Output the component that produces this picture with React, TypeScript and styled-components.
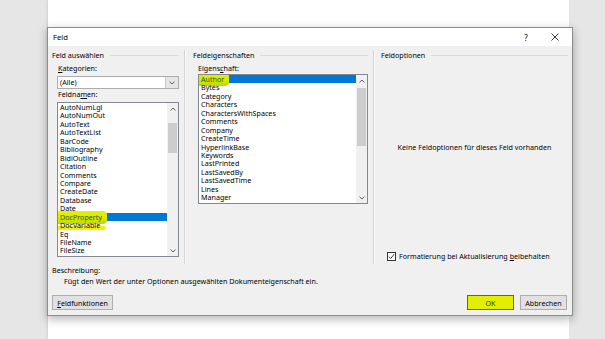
import React from "react";
import styled, { createGlobalStyle } from "styled-components";

const Global = createGlobalStyle`
  html, body { margin: 0; padding: 0; }
  body {
    width: 605px; height: 339px; overflow: hidden;
    font-family: "Noto Sans", "Open Sans", sans-serif;
    font-size: 7.15px; color: #000;
  }
`;

const Screen = styled.div`
  position: relative;
  display: flex;
  width: 605px;
  height: 339px;
`;

const Gutter = styled.div<{ $w: number }>`
  width: ${(p) => p.$w}px;
  background: #e6e6e6;
`;

const Paper = styled.div`
  flex: 1;
  background: #fff;
  box-shadow: 0 0 3px rgba(0, 0, 0, 0.18);
`;

const Dialog = styled.div`
  position: absolute;
  left: 47px;
  top: 27px;
  width: 526px;
  height: 289px;
  box-sizing: border-box;
  border: 1px solid #8c8c8c;
  box-shadow: 0 3px 9px rgba(0, 0, 0, 0.3);
  display: flex;
  flex-direction: column;
  background: #f0f0f0;
`;

const TitleBar = styled.div`
  height: 18px;
  flex: none;
  background: #fff;
  display: flex;
  align-items: center;
  padding-left: 5px;
  font-size: 7.6px;
`;

const Title = styled.span`
  flex: 1;
`;

const TitleBtn = styled.div<{ $w: number }>`
  width: ${(p) => p.$w}px;
  height: 18px;
  display: flex;
  align-items: center;
  justify-content: center;
  font-size: 8px;
`;

const Body = styled.div`
  flex: 1;
  display: flex;
  flex-direction: column;
  padding: 4px 4px 5px 4px;
`;

const Columns = styled.div`
  display: grid;
  grid-template-columns: 132px 189px 1fr;
  height: 214px;
`;

const Col = styled.div<{ $pl: number; $pr: number; $sep?: boolean }>`
  display: flex;
  flex-direction: column;
  padding-left: ${(p) => p.$pl}px;
  padding-right: ${(p) => p.$pr}px;
  border-left: ${(p) => (p.$sep ? "1px solid #d2d2d2" : "none")};
  box-shadow: ${(p) => (p.$sep ? "inset 1px 0 0 #fbfbfb" : "none")};
  min-width: 0;
`;

const Heading = styled.div`
  height: 10px;
  line-height: 10px;
  display: flex;
  align-items: center;
  gap: 6px;
  white-space: nowrap;
  &::after {
    content: "";
    flex: 1;
    height: 1px;
    background: #dcdcdc;
  }
`;

const Label = styled.div<{ $mt: number; $ml: number }>`
  height: 10px;
  line-height: 10px;
  margin-top: ${(p) => p.$mt}px;
  margin-left: ${(p) => p.$ml}px;
`;

const Combo = styled.div`
  margin: 3px 0 0 5px;
  width: 122px;
  height: 13px;
  box-sizing: border-box;
  border: 1px solid #adadad;
  background: #fff;
  display: flex;
  align-items: stretch;
`;

const ComboText = styled.div`
  flex: 1;
  padding-left: 2px;
  line-height: 11px;
`;

const ComboBtn = styled.div`
  width: 12px;
  background: #e5e5e5;
  border-left: 1px solid #c8c8c8;
  display: flex;
  align-items: center;
  justify-content: center;
`;

const ListBox = styled.div<{ $w: number; $h: number; $mt: number }>`
  margin: ${(p) => p.$mt}px 0 0 5px;
  width: ${(p) => p.$w}px;
  height: ${(p) => p.$h}px;
  box-sizing: border-box;
  border: 1px solid #828790;
  background: #fff;
  display: flex;
  overflow: hidden;
`;

const Items = styled.div`
  flex: 1;
  min-width: 0;
`;

const Row = styled.div<{ $selected?: boolean }>`
  height: 8.45px;
  line-height: 8.45px;
  padding-left: 2px;
  white-space: nowrap;
  background: ${(p) => (p.$selected ? "#0078d7" : "transparent")};
  color: ${(p) => (p.$selected ? "#fff" : "#000")};
`;

const Mark = styled.span<{ $half?: boolean }>`
  display: inline-block;
  margin: -2px 0 -3px -3px;
  padding: 2px 5px 3px 3px;
  line-height: 8.45px;
  color: ${(p) => (p.$half ? "#000" : "#2a5c00")};
  background: ${(p) =>
    p.$half
      ? "linear-gradient(to bottom, transparent 0%, transparent 50%, #eef200 50%, #eef200 80%, transparent 80%)"
      : "linear-gradient(to bottom, #e8f000 0%, #d6e800 60%, #b6d80f 100%)"};
  border-radius: 2px 4px 4px 2px;
`;

const Scrollbar = styled.div`
  width: 11px;
  background: #f0f0f0;
  display: flex;
  flex-direction: column;
`;

const ArrowBtn = styled.div`
  height: 11px;
  display: flex;
  align-items: center;
  justify-content: center;
  flex: none;
`;

const Track = styled.div<{ $top: number }>`
  flex: 1;
  padding-top: ${(p) => p.$top}px;
`;

const Thumb = styled.div<{ $h: number }>`
  height: ${(p) => p.$h}px;
  margin: 0 1px;
  background: #cdcdcd;
`;

const Message = styled.div`
  margin-top: 82px;
  height: 10px;
  line-height: 10px;
  text-align: center;
`;

const CheckRow = styled.div`
  margin-top: 99px;
  margin-left: 6px;
  display: flex;
  align-items: center;
  gap: 3px;
  height: 10px;
`;

const CheckBox = styled.div`
  width: 9px;
  height: 9px;
  box-sizing: border-box;
  border: 1px solid #333;
  background: #fff;
  display: flex;
  align-items: center;
  justify-content: center;
`;

const Description = styled.div`
  margin-top: 1px;
`;

const DescLine = styled.div<{ $indent: number }>`
  height: 10.5px;
  line-height: 10.5px;
  padding-left: ${(p) => p.$indent}px;
`;

const Footer = styled.div`
  margin-top: 9px;
  display: flex;
  align-items: center;
  gap: 6px;
  padding-right: 1px;
`;

const Spacer = styled.div`
  flex: 1;
`;

const Button = styled.div<{ $w: number; $default?: boolean }>`
  width: ${(p) => p.$w}px;
  height: 15px;
  box-sizing: border-box;
  border: 1px solid ${(p) => (p.$default ? "#0078d7" : "#adadad")};
  background: ${(p) => (p.$default ? "#e4ee00" : "#e1e1e1")};
  display: flex;
  align-items: center;
  justify-content: center;
  color: ${(p) => (p.$default ? "#1f3d00" : "#000")};
`;

const U = styled.span`
  text-decoration: underline;
`;

const Chevron = ({ up }: { up?: boolean }) => (
  <svg width="6" height="4" viewBox="0 0 6 4">
    <polyline
      points={up ? "0.5,3.5 3,1 5.5,3.5" : "0.5,0.5 3,3 5.5,0.5"}
      fill="none"
      stroke="#606060"
      strokeWidth="1"
    />
  </svg>
);

const names = [
  "AutoNumLgl", "AutoNumOut", "AutoText", "AutoTextList", "BarCode",
  "Bibliography", "BidiOutline", "Citation", "Comments", "Compare",
  "CreateDate", "Database", "Date", "DocProperty", "DocVariable", "Eq",
  "FileName", "FileSize",
];

const props = [
  "Author", "Bytes", "Category", "Characters", "CharactersWithSpaces",
  "Comments", "Company", "CreateTime", "HyperlinkBase", "Keywords",
  "LastPrinted", "LastSavedBy", "LastSavedTime", "Lines", "Manager",
];

export default function App() {
  return (
    <>
      <Global />
      <Screen>
        <Gutter $w={48} />
        <Paper />
        <Gutter $w={36} />
        <Dialog>
          <TitleBar>
            <Title>Feld</Title>
            <TitleBtn $w={24}>?</TitleBtn>
            <TitleBtn $w={34}>
              <svg width="8" height="8" viewBox="0 0 8 8">
                <path d="M0.5 0.5 L7.5 7.5 M7.5 0.5 L0.5 7.5" stroke="#222" strokeWidth="0.9" />
              </svg>
            </TitleBtn>
          </TitleBar>
          <Body>
            <Columns>
              <Col $pl={0} $pr={5}>
                <Heading>Feld auswählen</Heading>
                <Label $mt={3} $ml={6}>
                  <U>K</U>ategorien:
                </Label>
                <Combo>
                  <ComboText>(Alle)</ComboText>
                  <ComboBtn>
                    <Chevron />
                  </ComboBtn>
                </Combo>
                <Label $mt={0} $ml={6}>
                  Feldna<U>m</U>en:
                </Label>
                <ListBox $w={122} $h={155} $mt={3}>
                  <Items>
                    {names.map((n) => (
                      <Row key={n} $selected={n === "DocProperty"}>
                        {n === "DocProperty" ? (
                          <Mark>{n}</Mark>
                        ) : n === "DocVariable" ? (
                          <Mark $half>{n}</Mark>
                        ) : (
                          n
                        )}
                      </Row>
                    ))}
                  </Items>
                  <Scrollbar>
                    <ArrowBtn>
                      <Chevron up />
                    </ArrowBtn>
                    <Track $top={9}>
                      <Thumb $h={30} />
                    </Track>
                    <ArrowBtn>
                      <Chevron />
                    </ArrowBtn>
                  </Scrollbar>
                </ListBox>
              </Col>
              <Col $pl={8} $pr={5} $sep>
                <Heading>Feldeigenschaften</Heading>
                <Label $mt={3} $ml={5}>
                  Eigens<U>c</U>haft:
                </Label>
                <ListBox $w={170} $h={130} $mt={1}>
                  <Items>
                    {props.map((n) => (
                      <Row key={n} $selected={n === "Author"}>
                        {n === "Author" ? <Mark>{n}</Mark> : n}
                      </Row>
                    ))}
                  </Items>
                  <Scrollbar>
                    <ArrowBtn>
                      <Chevron up />
                    </ArrowBtn>
                    <Track $top={2}>
                      <Thumb $h={58} />
                    </Track>
                    <ArrowBtn>
                      <Chevron />
                    </ArrowBtn>
                  </Scrollbar>
                </ListBox>
              </Col>
              <Col $pl={7} $pr={0} $sep>
                <Heading>Feldoptionen</Heading>
                <Message>Keine Feldoptionen für dieses Feld vorhanden</Message>
                <CheckRow>
                  <CheckBox>
                    <svg width="7" height="7" viewBox="0 0 7 7">
                      <polyline points="0.8,3.6 2.7,5.5 6.2,1.2" fill="none" stroke="#222" strokeWidth="0.9" />
                    </svg>
                  </CheckBox>
                  <span>
                    Formatierung bei Aktualisierung <U>b</U>eibehalten
                  </span>
                </CheckRow>
              </Col>
            </Columns>
            <Description>
              <DescLine $indent={0}>Beschreibung:</DescLine>
              <DescLine $indent={12}>
                Fügt den Wert der unter Optionen ausgewählten Dokumenteigenschaft ein.
              </DescLine>
            </Description>
            <Footer>
              <Button $w={61}>
                <span>
                  <U>F</U>eldfunktionen
                </span>
              </Button>
              <Spacer />
              <Button $w={47} $default>
                OK
              </Button>
              <Button $w={47}>Abbrechen</Button>
            </Footer>
          </Body>
        </Dialog>
      </Screen>
    </>
  );
}
